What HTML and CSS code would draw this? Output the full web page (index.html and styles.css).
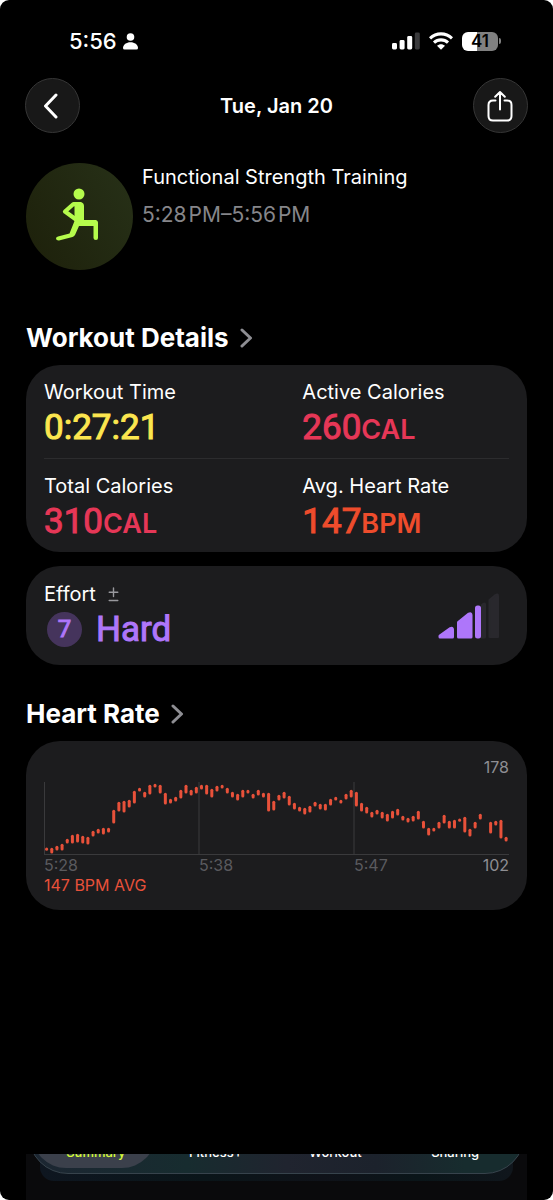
FILE: index.html
```html
<!DOCTYPE html>
<html lang="en">
<head>
<meta charset="utf-8">
<meta name="viewport" content="width=device-width, initial-scale=1">
<title>Workout</title>
<link rel="stylesheet" href="styles.css">
</head>
<body>
<div class="screen">
  <div class="status">
    <div class="status-left">
      <span class="clock">5:56</span>
      <svg width="15" height="17" viewBox="0 0 15 17" fill="#fff" aria-hidden="true"><circle cx="7.5" cy="4" r="3.8"/><path d="M0 15C0 11.5 3.5 9.2 7.5 9.2S15 11.5 15 15Q15 16.6 13.4 16.6H1.6Q0 16.6 0 15Z"/></svg>
    </div>
    <div class="status-right">
      <svg width="28" height="18" viewBox="0 0 28 18" fill="#fff" aria-hidden="true"><rect x="0" y="11" width="5" height="6.5" rx="1.4"/><rect x="7.6" y="8" width="5" height="9.5" rx="1.4"/><rect x="15.2" y="4" width="5" height="13.5" rx="1.4"/><rect x="22.8" y="0.5" width="5" height="17" rx="1.4" fill="#3a3a3c"/></svg>
      <svg width="24" height="18" viewBox="0 0 24 18" aria-hidden="true"><g fill="none" stroke="#fff" stroke-width="3.1"><path d="M1 6.4C7.2.4 16.8.4 23 6.4"/><path d="M5 10.6C9 6.9 15 6.9 19 10.6"/></g><path d="M8 13.7C10.2 11.6 13.8 11.6 16 13.7L12 17.7Z" fill="#fff"/></svg>
      <span class="battery"><span class="battery-level">41</span><span class="battery-cap"></span></span>
    </div>
  </div>

  <header class="topbar">
    <button class="round back" aria-label="Back"><svg width="16" height="26" viewBox="0 0 16 26" fill="none" stroke="#fff" stroke-width="3" stroke-linecap="round" stroke-linejoin="round"><path d="M13 2 2.5 13 13 24"/></svg></button>
    <h1 class="date">Tue, Jan 20</h1>
    <button class="round" aria-label="Share"><svg width="26" height="32" viewBox="0 0 26 32" fill="none" stroke="#fff" stroke-width="2" stroke-linecap="round" stroke-linejoin="round"><path d="M8.5 10.500H6Q1.500 10.500 1.500 15V26Q1.500 30.500 6 30.500H20Q24.500 30.500 24.500 26V15Q24.500 10.500 20 10.500H17.500M13 19.500V2M8.200 6.800 13 2 17.800 6.800"/></svg></button>
  </header>

  <main class="content">
    <section class="intro">
      <div class="sport">
        <svg width="44" height="54" viewBox="0 0 44 54" aria-hidden="true"><circle cx="24" cy="6" r="5.500" fill="#b5fb4c"/><path d="M24 16.500 18.500 16 10 23.500 21 31.500" fill="none" stroke="#b5fb4c" stroke-width="4.200" stroke-linecap="round" stroke-linejoin="round"/><path d="M19 14H26Q29 15 29 18V32H41Q43 32.500 43 34.500V50Q43 52 41 52Q38.500 52 38.500 50V38H24L20 47Q19 48.600 17.500 49L4 52.400Q1 52.500 1 50.500Q1 49 3 48.400L14.500 45.500 19.500 33V19Z" fill="#b5fb4c"/></svg>
      </div>
      <div class="intro-text">
        <p class="name">Functional Strength Training</p>
        <p class="time">5:28&#8202;PM–5:56&#8202;PM</p>
      </div>
    </section>

    <h2 class="heading"><a href="#details">Workout Details <svg width="13" height="20" viewBox="0 0 13 20"><path d="M2 2 10.500 10 2 18"/></svg></a></h2>
    <section class="card" id="details">
      <div class="stats">
        <div class="stat"><p class="label">Workout Time</p><p class="value yellow">0:27:21</p></div>
        <div class="stat"><p class="label">Active Calories</p><p class="value pink">260<span class="unit">CAL</span></p></div>
      </div>
      <div class="stats">
        <div class="stat"><p class="label">Total Calories</p><p class="value pink">310<span class="unit">CAL</span></p></div>
        <div class="stat"><p class="label">Avg. Heart Rate</p><p class="value orange">147<span class="unit">BPM</span></p></div>
      </div>
    </section>

    <section class="card effort">
      <div>
        <p class="label effort-label">Effort <svg width="11" height="15" viewBox="0 0 11 15" fill="none" stroke="#98989d" stroke-width="1.400" stroke-linecap="round" aria-hidden="true"><path d="M5.500 1V9.500M1.200 5.200H9.800M1.200 13.500H9.800"/></svg></p>
        <p class="value purple effort-value"><span class="badge">7</span>Hard</p>
      </div>
      <svg width="61" height="48" viewBox="0 0 61 48" stroke-linejoin="round" stroke-width="3" aria-hidden="true"><g fill="#ae76fa" stroke="#ae76fa"><path d="M2 45V44L12.500 36.500Q14.500 35.500 14.500 37.500V45Z"/><path d="M20.500 45V30.500L31 22Q33 21 33 23V45Z"/></g><path d="M43 12.500Q47 9 48 12V45Q48 46.500 46.500 46.500H43Z" fill="#29282d"/><path d="M51.500 45V8L57.500 3Q60 1.500 60 4V45Z" fill="#29282d" stroke="#29282d" stroke-width="2"/><rect x="37" y="13.500" width="6" height="33" rx="2.500" fill="#ae76fa"/></svg>
    </section>

    <h2 class="heading"><a href="#heart">Heart Rate <svg width="13" height="20" viewBox="0 0 13 20"><path d="M2 2 10.500 10 2 18"/></svg></a></h2>
    <section class="card heart" id="heart">
      <p class="limit">178</p>
      <svg class="chart" viewBox="0 0 465 73" role="img" aria-label="Heart rate over the workout">
        <path class="grid" d="M.5 0V72.500M155 0V72.500M310 0V72.500M0 72.500H465"/>
        <g id="bars"></g>
      </svg>
      <div class="axis"><span>5:28</span><span>5:38</span><span>5:47</span><span class="limit">102</span></div>
      <p class="average">147 BPM AVG</p>
    </section>
  </main>

  <nav class="dock">
    <div class="tabs">
      <a class="tab active" href="#summary">Summary</a>
      <a class="tab" href="#fitness">Fitness+</a>
      <a class="tab" href="#workout">Workout</a>
      <a class="tab" href="#sharing">Sharing</a>
    </div>
  </nav>
</div>
<script src="chart.js"></script>
</body>
</html>
```

FILE: styles.css
```css
* { box-sizing: border-box; }
html { background: #fff; }
body {
  margin: 0;
  font-family: Inter, "Liberation Sans", sans-serif;
  color: #fff;
}
h1, h2, p { margin: 0; }
a { color: inherit; text-decoration: none; }
svg { display: block; flex: none; }

.screen {
  display: flex;
  flex-direction: column;
  min-height: 100vh;
  background: #000;
  border-radius: 9px;
  overflow: hidden;
}

/* Status bar */
.status {
  display: flex;
  justify-content: space-between;
  align-items: center;
  height: 50px;
  padding: 32px 52px 0 69px;
}
.status-left { display: flex; align-items: center; gap: 6px; }
.clock { font-size: 22px; line-height: 18px; font-weight: 500; }
.status-right { display: flex; align-items: center; gap: 9px; }
.battery { display: flex; align-items: center; gap: 1px; }
.battery-level {
  width: 36px;
  border-radius: 6px;
  background: linear-gradient(90deg, #fff 41%, #808080 41%);
  color: #000;
  font-size: 17px;
  line-height: 19px;
  font-weight: 600;
  text-align: center;
}
.battery-cap { width: 2px; height: 6px; border-radius: 0 2px 2px 0; background: #808080; }

/* Top bar */
.topbar {
  display: flex;
  justify-content: space-between;
  align-items: center;
  padding: 28px 25px 0;
}
.round {
  display: flex;
  justify-content: center;
  align-items: center;
  width: 55px;
  height: 55px;
  padding: 0 1px 0 0;
  border: 1px solid #363636;
  border-radius: 50%;
  background: #181818;
}
.back { padding-right: 3px; }
.date { font-size: 20px; line-height: 26px; font-weight: 600; }

.content { padding: 30px 26px; }

/* Workout title */
.intro { display: flex; gap: 9px; margin-bottom: 47px; }
.sport {
  display: flex;
  justify-content: center;
  align-items: center;
  width: 107px;
  height: 107px;
  padding: 0 5px 3px 0;
  border-radius: 50%;
  background: linear-gradient(60deg, #1d200a, #273118);
}
.intro-text { padding-top: 1px; }
.name { font-size: 20px; line-height: 26px; }
.time { margin-top: 12px; font-size: 21px; line-height: 26px; color: #86868a; }

.heading { padding: 5px 0 11px; font-size: 26px; line-height: 32px; font-weight: 700; }
.heading a { display: flex; align-items: center; gap: 11px; }
.heading path {
  fill: none;
  stroke: #8e8e93;
  stroke-width: 3;
  stroke-linecap: round;
  stroke-linejoin: round;
}

/* Cards */
.card { padding: 0 18px; border-radius: 34px; background: #1c1c1e; }
.stats { display: grid; grid-template-columns: 5fr 4fr; padding: 14px 0 9px; }
.stats + .stats { border-top: 1px solid #2c2c2e; }
.label { font-size: 20px; line-height: 26px; }
.value {
  height: 44px;
  font-family: Roboto, "Liberation Sans", sans-serif;
  font-size: 35px;
  line-height: 45px;
  font-weight: 400;
  -webkit-text-stroke: 1px currentColor;
}
.unit {
  font-family: Inter, "Liberation Sans", sans-serif;
  font-size: 27px;
  line-height: 27px;
  font-weight: 600;
  -webkit-text-stroke: 0;
}
.yellow { color: #fce64f; }
.pink { color: #e63757; }
.orange { color: #ee4c2c; }
.purple { color: #ae76fa; }

.effort {
  display: flex;
  justify-content: space-between;
  align-items: center;
  margin: 14px 0 28px;
  padding: 15px 28px 14px 18px;
}
.effort-label { display: flex; align-items: center; gap: 12px; }
.effort-value { display: flex; align-items: center; gap: 14px; padding-left: 3px; }
.badge {
  width: 35px;
  height: 35px;
  border-radius: 50%;
  background: #45345c;
  font-size: 24px;
  line-height: 35px;
  font-weight: 400;
  text-align: center;
}

/* Heart rate */
.heart { padding-top: 16px; padding-bottom: 15px; }
.heart p, .axis { font-size: 16px; line-height: 20px; }
.heart .limit { color: #8e8e93; text-align: right; }
.chart { width: 100%; margin-top: 5px; }
.grid { fill: none; stroke: #3a3a3c; stroke-width: 1; }
.bar { stroke: #e8513a; stroke-width: 3; stroke-linecap: round; }
.axis { display: grid; grid-template-columns: 2fr 2fr 1fr 1fr; color: #5a5a5e; }
.heart .average { color: #e8513a; }

/* Tab bar */
.dock {
  position: relative;
  height: 46px;
  margin: auto 26px 0;
  padding: 0 2px;
  background: #0a0a0c;
  overflow: hidden;
}
.dock::before {
  content: "";
  position: absolute;
  inset: -20px 14px 19px;
  border-radius: 14px;
  background: linear-gradient(90deg, #0e1620, #0a1519 35%, #0f1219 60%, #0a1519 80%, #10161c);
}
.tabs {
  position: relative;
  display: grid;
  grid-template-columns: repeat(4, 1fr);
  height: 80px;
  margin-top: -60px;
  padding: 4px 9px 5px 7px;
  border: 1px solid #37434c;
  border-radius: 40px;
  background: linear-gradient(90deg, #1c2632, #172c2f 32%, #20242f 52%, #1c222c 70%, #172c2e 88%);
}
.tab {
  display: flex;
  align-items: flex-end;
  justify-content: center;
  padding-bottom: 8px;
  font-size: 13px;
  line-height: 16px;
  font-weight: 500;
}
.active { margin-left: -4px; padding-left: 4px; border-radius: 34px; background: #3b404b; color: #d5fb36; }
```

FILE: chart.js
```js
// [top, bottom] of each heart rate range, null where no sample was taken
const ranges = [
  [66,68],[66,71],[64,68],[62,68],[57,61],[53,61],[52,60],[54,61],[55,62],[49,54],
  [47,51],[46,52],[46,50],[28,41],[20,29],[19,30],[18,25],[9,21],[6,9],[10,15],
  [3,12],[2,5],[3,11],[11,22],[17,21],[15,19],[8,16],[3,11],[8,13],[5,11],
  [3,7],[3,12],[7,15],[4,9],[3,6],[6,11],[10,15],[12,18],[8,15],[8,11],
  [12,16],[8,13],[11,15],[11,29],[19,28],[13,18],[10,16],[14,23],[21,27],[25,29],
  [26,32],[24,30],[20,24],[22,27],[22,28],[17,23],[15,18],[18,21],[12,17],[8,15],
  [10,24],[21,29],[25,31],[30,35],[28,32],[30,36],[32,39],[29,36],[27,33],[34,38],
  [36,40],[34,39],[29,37],[39,46],[46,53],[46,49],[40,46],[33,41],[39,46],[38,46],
  [37,39],[35,50],[47,54],[40,46],[32,37],null,[40,51],[39,43],[38,56],[55,59]
];
const group = document.getElementById("bars");
ranges.forEach((range, i) => {
  if (!range) return;
  const x = 2.6 + i * 5.163;
  const line = document.createElementNS("http://www.w3.org/2000/svg", "line");
  line.setAttribute("class", "bar");
  line.setAttribute("x1", x);
  line.setAttribute("x2", x);
  line.setAttribute("y1", range[0] + 1.3);
  line.setAttribute("y2", range[1] - 0.9);
  group.appendChild(line);
});
```
